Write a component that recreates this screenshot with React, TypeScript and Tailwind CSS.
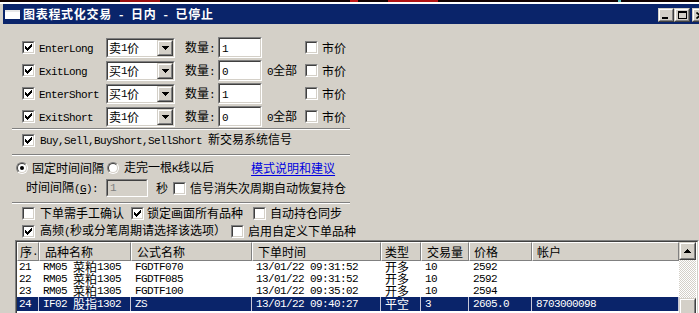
import React from "react";

// ascii runs take a half-width mono face, like the SimSun latin glyphs
function T({ s }: { s: string }) {
  const parts = s.match(/[\x20-\x7e]+|[^\x20-\x7e]+/g) ?? [];
  return (
    <>
      {parts.map((p, i) =>
        /^[\x20-\x7e]+$/.test(p) ? (
          <span key={i} className="font-['Liberation_Mono',monospace] text-[11px] tracking-[-0.6px] whitespace-pre">
            {p}
          </span>
        ) : (
          <span key={i} className="whitespace-pre">{p}</span>
        )
      )}
    </>
  );
}

const CHECK = [
  [6, 0, 1], [5, 1, 2], [0, 2, 1], [4, 2, 3], [0, 3, 2], [3, 3, 3], [0, 4, 5], [1, 5, 3], [2, 6, 1],
];

function Check({ on }: { on?: boolean }) {
  return (
    <span className="flex w-[13px] h-[13px] shrink-0 border border-t-[#808080] border-l-[#808080] border-b-white border-r-white">
      <span className="flex flex-1 items-center justify-center bg-white border border-t-[#404040] border-l-[#404040] border-b-[#d4d0c8] border-r-[#d4d0c8]">
        {on && (
          <svg width="7" height="7" viewBox="0 0 7 7" shapeRendering="crispEdges">
            {CHECK.map(([x, y, w]) => (
              <rect key={`${x}-${y}`} x={x} y={y} width={w} height={1} fill="#000" />
            ))}
          </svg>
        )}
      </span>
    </span>
  );
}

function Radio({ on }: { on?: boolean }) {
  return (
    <span className="flex w-[12px] h-[12px] shrink-0 rounded-full border border-t-[#808080] border-l-[#808080] border-b-white border-r-white">
      <span className="flex flex-1 items-center justify-center rounded-full bg-white border border-t-[#404040] border-l-[#404040] border-b-[#d4d0c8] border-r-[#d4d0c8]">
        {on && <span className="w-[4px] h-[4px] rounded-full bg-black" />}
      </span>
    </span>
  );
}

function Raised({ children, className }: { children?: React.ReactNode; className?: string }) {
  return (
    <span className={`flex shrink-0 border border-t-[#d4d0c8] border-l-[#d4d0c8] border-b-[#404040] border-r-[#404040] ${className ?? ""}`}>
      <span className="flex flex-1 items-center justify-center bg-[#d4d0c8] border border-t-white border-l-white border-b-[#808080] border-r-[#808080]">
        {children}
      </span>
    </span>
  );
}

function Arrow({ up }: { up?: boolean }) {
  const rows = [[0, 7], [1, 5], [2, 3], [3, 1]];
  return (
    <svg width="7" height="4" viewBox="0 0 7 4" shapeRendering="crispEdges">
      {rows.map(([y, w]) => (
        <rect key={y} x={(7 - w) / 2} y={up ? 3 - y : y} width={w} height={1} fill="#000" />
      ))}
    </svg>
  );
}

function Sunken({ children, className, inner }: { children?: React.ReactNode; className?: string; inner?: string }) {
  return (
    <span className={`flex shrink-0 border border-t-[#808080] border-l-[#808080] border-b-white border-r-white ${className ?? ""}`}>
      <span className={`flex flex-1 border border-t-[#404040] border-l-[#404040] border-b-[#d4d0c8] border-r-[#d4d0c8] ${inner ?? "bg-white"}`}>
        {children}
      </span>
    </span>
  );
}

function Combo({ v }: { v: string }) {
  return (
    <Sunken className="w-[69px] h-[20px]">
      <span className="flex-1 flex items-center pl-[1px]">
        <T s={v} />
      </span>
      <Raised className="w-[16px]">
        <Arrow />
      </Raised>
    </Sunken>
  );
}

function Sep() {
  return <div className="ml-[12px] w-[338px] h-[2px] border-t border-t-[#808080] border-b border-b-white" />;
}

const orderRows = [
  { name: "EnterLong", px: "卖1价", qty: "1", all: false },
  { name: "ExitLong", px: "买1价", qty: "0", all: true },
  { name: "EnterShort", px: "买1价", qty: "1", all: false },
  { name: "ExitShort", px: "卖1价", qty: "0", all: true },
];

const cols = [
  { h: "序.", w: "w-[22px]", pad: "pl-[2px]" },
  { h: "品种名称", w: "w-[92px]", pad: "pl-[5px]" },
  { h: "公式名称", w: "w-[121px]", pad: "pl-[5px]" },
  { h: "下单时间", w: "w-[129px]", pad: "pl-[5px]" },
  { h: "类型", w: "w-[40px]", pad: "pl-[3px]" },
  { h: "交易量", w: "w-[48px]", pad: "pl-[5px]" },
  { h: "价格", w: "w-[63px]", pad: "pl-[4px]" },
  { h: "帐户", w: "w-[147px]", pad: "pl-[4px]" },
];

const trades = [
  ["21", "RM05 菜粕1305", "FGDTF070", "13/01/22 09:31:52", "开多", "10", "2592", ""],
  ["22", "RM05 菜粕1305", "FGDTF085", "13/01/22 09:31:52", "开多", "10", "2592", ""],
  ["23", "RM05 菜粕1305", "FGDTF100", "13/01/22 09:35:02", "开多", "10", "2594", ""],
  ["24", "IF02 股指1302", "ZS", "13/01/22 09:40:27", "平空", "3", "2605.0", "8703000098"],
];

export default function App() {
  return (
    <div className="w-[699px] h-[313px] overflow-hidden bg-[#d4d0c8] text-black text-[12px] leading-[14px] font-['Noto_Sans_CJK_SC','Liberation_Sans',sans-serif]">
      <div className="flex h-[2px] bg-[#120202]">
        <span className="ml-[120px] w-[40px] bg-[#9a1010]" />
        <span className="ml-[190px] w-[8px] bg-[#c01818]" />
        <span className="ml-[30px] w-[50px] bg-[#b01414]" />
        <span className="ml-[180px] w-[3px] bg-[#60c8c8]" />
      </div>
      <div className="h-[2px] bg-white" />

      {/* title bar */}
      <div className="ml-[3px] h-[20px] flex items-center bg-[#0a246a] overflow-hidden">
        <span className="ml-[2px] w-[15px] h-[9px] shrink-0 bg-white border-t-2 border-[#e8e8e8]" />
        <span className="ml-[3px] w-[635px] shrink-0 flex items-center text-white font-bold text-[12px] tracking-[0.7px]">
          <span>图表程式化交易</span>
          <span className="px-[7px]">-</span>
          <span>日内</span>
          <span className="px-[7px]">-</span>
          <span>已停止</span>
        </span>
        <Raised className="w-[16px] h-[14px] mt-[2px]">
          <span className="mt-[6px] mr-[2px] w-[6px] h-[2px] bg-black" />
        </Raised>
        <Raised className="w-[16px] h-[14px] mt-[2px]">
          <span className="w-[9px] h-[8px] border border-t-2 border-black" />
        </Raised>
        <Raised className="w-[16px] h-[14px] mt-[2px] ml-[2px]">
          <svg width="8" height="7" viewBox="0 0 8 7">
            <path d="M0.5 0.5 L7.5 6.5 M7.5 0.5 L0.5 6.5" stroke="#000" strokeWidth="1.6" />
          </svg>
        </Raised>
      </div>

      {/* order settings */}
      <div className="pt-[12px]">
        {orderRows.map((r) => (
          <div key={r.name} className="flex items-center h-[23px] pl-[22px]">
            <Check on />
            <span className="w-[71px] shrink-0 pl-[4px]">
              <T s={r.name} />
            </span>
            <Combo v={r.px} />
            <span className="ml-[10px] w-[33px] shrink-0">
              <T s="数量:" />
            </span>
            <Sunken className="w-[44px] h-[21px]">
              <span className="pl-[2px] pt-[1px]">
                <T s={r.qty} />
              </span>
            </Sunken>
            <span className="w-[43px] shrink-0 pl-[5px]">{r.all && <T s="0全部" />}</span>
            <Check />
            <span className="ml-[4px]">市价</span>
          </div>
        ))}
      </div>
      <Sep />
      <div className="flex items-center h-[20px] pl-[22px]">
        <Check on />
        <span className="ml-[5px]">
          <T s="Buy,Sell,BuyShort,SellShort 新交易系统信号" />
        </span>
      </div>
      <div className="mt-[4px]">
        <Sep />
      </div>
      <div className="flex items-center h-[23px] pl-[16px]">
        <Radio on />
        <span className="ml-[4px]">固定时间间隔</span>
        <span className="ml-[3px]">
          <Radio />
        </span>
        <span className="ml-[5px]">
          <T s="走完一根K线以后" />
        </span>
        <a className="ml-[37px] text-[#0000e0] underline underline-offset-2">模式说明和建议</a>
      </div>
      <div className="flex items-center h-[18px] pl-[26px]">
        <span>
          时间间隔<span className="font-['Liberation_Mono',monospace] text-[11px] tracking-[-0.6px]">
            (<span className="underline">G</span>):
          </span>
        </span>
        <Sunken className="ml-[8px] w-[42px] h-[18px]" inner="bg-[#d4d0c8]">
          <span className="pl-[2px] text-[#808080] font-['Liberation_Mono',monospace] text-[11px]">1</span>
        </Sunken>
        <span className="ml-[8px]">秒</span>
        <span className="ml-[5px]">
          <Check />
        </span>
        <span className="ml-[4px]">信号消失次周期自动恢复持仓</span>
      </div>
      <div className="mt-[5px]">
        <Sep />
      </div>
      <div className="flex items-center h-[18px] pl-[22px]">
        <Check />
        <span className="ml-[5px]">下单需手工确认</span>
        <span className="ml-[7px]">
          <Check on />
        </span>
        <span className="ml-[3px]">锁定画面所有品种</span>
        <span className="ml-[10px]">
          <Check />
        </span>
        <span className="ml-[4px]">自动持仓同步</span>
      </div>
      <div className="flex items-center h-[18px] pl-[22px]">
        <Check on />
        <span className="ml-[5px]">
          <T s="高频(秒或分笔周期请选择该选项）" />
        </span>
        <span className="ml-[5px]">
          <Check />
        </span>
        <span className="ml-[4px]">启用自定义下单品种</span>
      </div>

      {/* order log */}
      <div className="ml-[15px] w-[684px] h-[80px] flex border border-t-[#808080] border-l-[#808080] border-b-white border-r-white">
        <div className="flex flex-1 bg-white border border-t-[#404040] border-l-[#404040] border-b-[#d4d0c8] border-r-[#d4d0c8]">
          <div className="w-[662px] shrink-0 flex flex-col">
            <div className="flex h-[19px]">
              {cols.map((c) => (
                <span
                  key={c.h}
                  className={`${c.w} ${c.pad} shrink-0 flex items-center bg-[#d4d0c8] border-t border-l border-t-white border-l-white border-r border-b border-r-[#808080] border-b-[#808080]`}
                >
                  <T s={c.h} />
                </span>
              ))}
            </div>
            {trades.map((row, i) => {
              const sel = i === trades.length - 1;
              return (
                <div
                  key={row[0]}
                  className={`flex leading-[12px] ${sel ? "h-[14px] bg-[#0a246a] text-white" : "h-[12px]"}`}
                >
                  {row.map((cell, j) => (
                    <span
                      key={j}
                      className={`${cols[j].w} shrink-0 flex items-center overflow-hidden border-r ${
                        sel ? "border-[#c8c8d8]" : "border-white"
                      } ${j === 0 ? "pl-[2px]" : "pl-[4px]"}`}
                    >
                      <T s={cell} />
                    </span>
                  ))}
                </div>
              );
            })}
          </div>
          <div className="flex flex-col w-[17px] shrink-0">
            <Raised className="h-[18px]">
              <Arrow up />
            </Raised>
            <div className="h-[40px] bg-[repeating-conic-gradient(#d4d0c8_0%_25%,#ffffff_0%_50%)] bg-[length:2px_2px]" />
            <Raised className="h-[20px]" />
          </div>
        </div>
      </div>
    </div>
  );
}
